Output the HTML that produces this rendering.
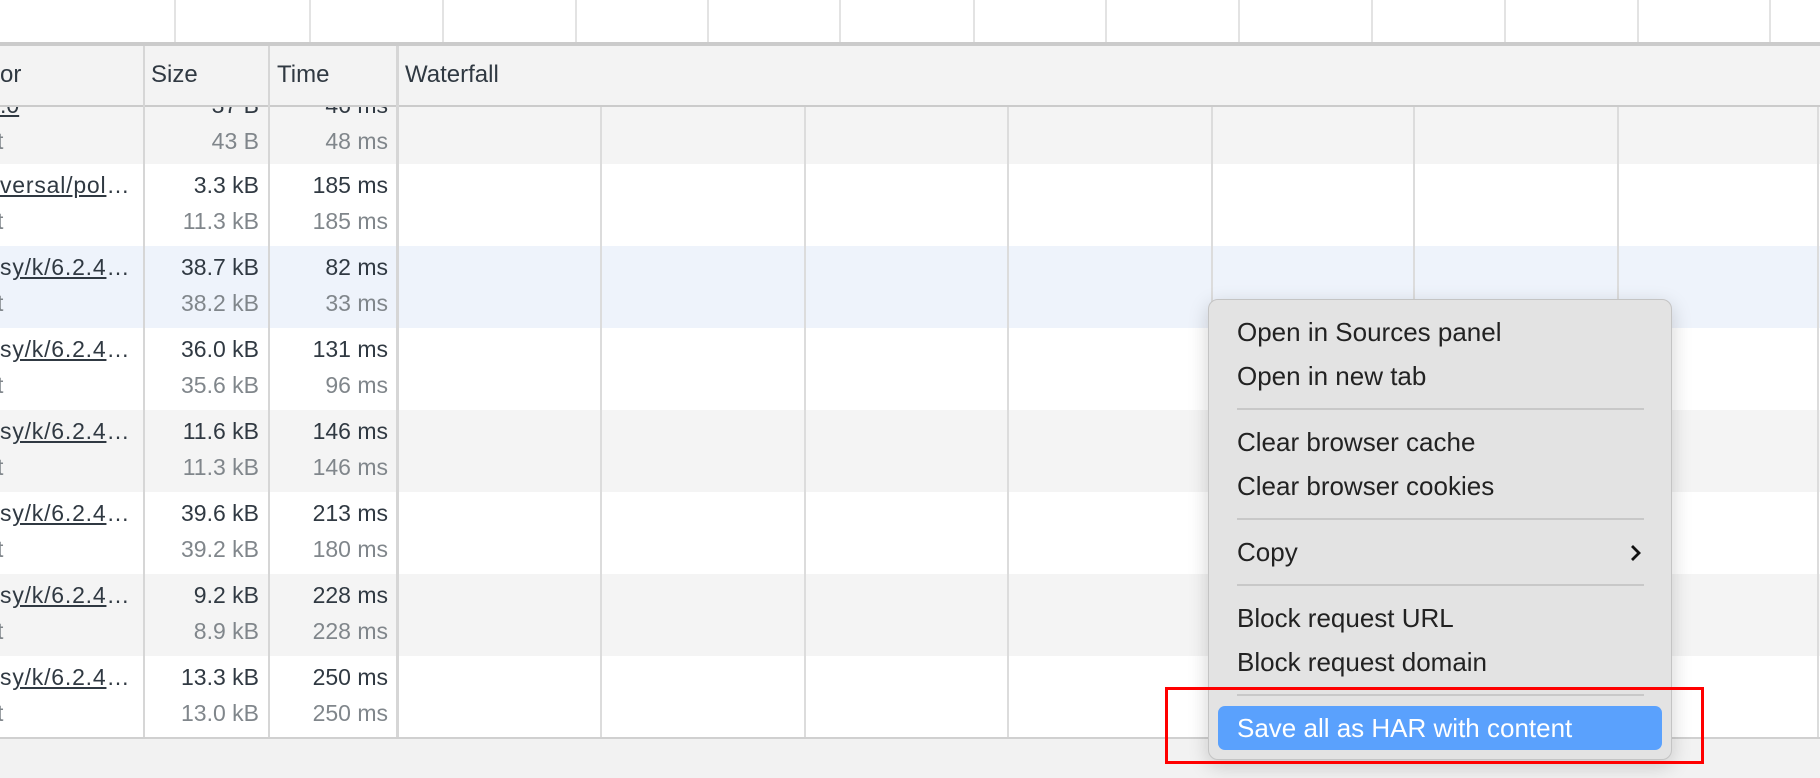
<!DOCTYPE html>
<html><head><meta charset="utf-8"><style>
*{margin:0;padding:0;box-sizing:border-box}
body{width:1820px;height:778px;overflow:hidden;background:#fff;position:relative;font-family:"Liberation Sans",Arial,sans-serif;}
.a{position:absolute}
.vt{position:absolute;top:0;height:44px;width:2px;background:#e3e3e3}
.row{position:absolute;left:0;width:1820px;height:82px;overflow:hidden}
.t{position:absolute;font-size:23px;line-height:26px;white-space:nowrap}
.h{font-size:24px}
.lk{letter-spacing:0.8px}
.d{color:#303942}.g{color:#80868b}
.r1{text-align:right}
.vl{position:absolute;width:2px;background:#dcdcdc}
.mi{position:absolute;left:1237px;font-size:26px;line-height:30px;color:#222}
.sep{position:absolute;left:1237px;width:407px;height:2px;background:#c8c8c8}
</style></head><body>
<div class="vt" style="left:174px"></div><div class="vt" style="left:309px"></div><div class="vt" style="left:442px"></div><div class="vt" style="left:575px"></div><div class="vt" style="left:707px"></div><div class="vt" style="left:839px"></div><div class="vt" style="left:973px"></div><div class="vt" style="left:1105px"></div><div class="vt" style="left:1238px"></div><div class="vt" style="left:1371px"></div><div class="vt" style="left:1504px"></div><div class="vt" style="left:1637px"></div><div class="vt" style="left:1769px"></div>
<div class="a" style="left:0;top:42px;width:1820px;height:4px;background:#cbcbcb"></div>
<div class="a" style="left:0;top:46px;width:1820px;height:61px;background:#f3f3f3;border-bottom:2px solid #cbcbcb"></div>
<div class="t d h" style="left:0;top:62px">or</div>
<div class="t d h" style="left:151px;top:62px">Size</div>
<div class="t d h" style="left:277px;top:62px">Time</div>
<div class="t d h" style="left:405px;top:62px">Waterfall</div>

<div class="row" style="top:107px;height:57px;background:#f4f4f4">
<div class="t d" style="left:0;top:-15px;text-decoration:underline">.0</div>
<div class="t d r1" style="left:140px;width:119px;top:-15px">37 B</div>
<div class="t d r1" style="left:270px;width:118px;top:-15px">46 ms</div>
<div class="t g" style="left:-3px;top:21px">t</div>
<div class="t g r1" style="left:140px;width:119px;top:21px">43 B</div>
<div class="t g r1" style="left:270px;width:118px;top:21px">48 ms</div>
</div>

<div class="row" style="top:164px;background:#fff">
<div class="t d lk" style="left:0;top:8px"><u>versal/pol</u>…</div>
<div class="t d r1" style="left:140px;width:119px;top:8px">3.3 kB</div>
<div class="t d r1" style="left:270px;width:118px;top:8px">185 ms</div>
<div class="t g" style="left:-3px;top:44px">t</div>
<div class="t g r1" style="left:140px;width:119px;top:44px">11.3 kB</div>
<div class="t g r1" style="left:270px;width:118px;top:44px">185 ms</div>
</div>

<div class="row" style="top:246px;background:#eef3fb">
<div class="t d lk" style="left:0;top:8px">s<u>y/k/6.2.4</u>…</div>
<div class="t d r1" style="left:140px;width:119px;top:8px">38.7 kB</div>
<div class="t d r1" style="left:270px;width:118px;top:8px">82 ms</div>
<div class="t g" style="left:-3px;top:44px">t</div>
<div class="t g r1" style="left:140px;width:119px;top:44px">38.2 kB</div>
<div class="t g r1" style="left:270px;width:118px;top:44px">33 ms</div>
</div>

<div class="row" style="top:328px;background:#fff">
<div class="t d lk" style="left:0;top:8px">s<u>y/k/6.2.4</u>…</div>
<div class="t d r1" style="left:140px;width:119px;top:8px">36.0 kB</div>
<div class="t d r1" style="left:270px;width:118px;top:8px">131 ms</div>
<div class="t g" style="left:-3px;top:44px">t</div>
<div class="t g r1" style="left:140px;width:119px;top:44px">35.6 kB</div>
<div class="t g r1" style="left:270px;width:118px;top:44px">96 ms</div>
</div>

<div class="row" style="top:410px;background:#f4f4f4">
<div class="t d lk" style="left:0;top:8px">s<u>y/k/6.2.4</u>…</div>
<div class="t d r1" style="left:140px;width:119px;top:8px">11.6 kB</div>
<div class="t d r1" style="left:270px;width:118px;top:8px">146 ms</div>
<div class="t g" style="left:-3px;top:44px">t</div>
<div class="t g r1" style="left:140px;width:119px;top:44px">11.3 kB</div>
<div class="t g r1" style="left:270px;width:118px;top:44px">146 ms</div>
</div>

<div class="row" style="top:492px;background:#fff">
<div class="t d lk" style="left:0;top:8px">s<u>y/k/6.2.4</u>…</div>
<div class="t d r1" style="left:140px;width:119px;top:8px">39.6 kB</div>
<div class="t d r1" style="left:270px;width:118px;top:8px">213 ms</div>
<div class="t g" style="left:-3px;top:44px">t</div>
<div class="t g r1" style="left:140px;width:119px;top:44px">39.2 kB</div>
<div class="t g r1" style="left:270px;width:118px;top:44px">180 ms</div>
</div>

<div class="row" style="top:574px;background:#f4f4f4">
<div class="t d lk" style="left:0;top:8px">s<u>y/k/6.2.4</u>…</div>
<div class="t d r1" style="left:140px;width:119px;top:8px">9.2 kB</div>
<div class="t d r1" style="left:270px;width:118px;top:8px">228 ms</div>
<div class="t g" style="left:-3px;top:44px">t</div>
<div class="t g r1" style="left:140px;width:119px;top:44px">8.9 kB</div>
<div class="t g r1" style="left:270px;width:118px;top:44px">228 ms</div>
</div>

<div class="row" style="top:656px;background:#fff">
<div class="t d lk" style="left:0;top:8px">s<u>y/k/6.2.4</u>…</div>
<div class="t d r1" style="left:140px;width:119px;top:8px">13.3 kB</div>
<div class="t d r1" style="left:270px;width:118px;top:8px">250 ms</div>
<div class="t g" style="left:-3px;top:44px">t</div>
<div class="t g r1" style="left:140px;width:119px;top:44px">13.0 kB</div>
<div class="t g r1" style="left:270px;width:118px;top:44px">250 ms</div>
</div>

<div class="vl" style="left:143px;top:46px;height:692px;background:#d6d6d6"></div>
<div class="vl" style="left:268px;top:46px;height:692px;background:#d6d6d6"></div>
<div class="vl" style="left:396px;top:46px;height:692px;width:3px;background:#d6d6d6"></div>
<div class="vl" style="left:600px;top:107px;height:631px"></div>
<div class="vl" style="left:804px;top:107px;height:631px"></div>
<div class="vl" style="left:1007px;top:107px;height:631px"></div>
<div class="vl" style="left:1211px;top:107px;height:631px"></div>
<div class="vl" style="left:1413px;top:107px;height:631px"></div>
<div class="vl" style="left:1617px;top:107px;height:631px"></div>
<div class="vl" style="left:1817px;top:107px;height:631px"></div>

<div class="a" style="left:0;top:737px;width:1820px;height:41px;background:#f2f2f2;border-top:2px solid #d0d0d0"></div>

<div class="a" style="left:1208px;top:299px;width:464px;height:461px;background:#e3e3e3;border:1px solid #c4c4c4;border-radius:10px;box-shadow:0 6px 20px rgba(0,0,0,0.18)"></div>
<div class="mi" style="top:317px">Open in Sources panel</div>
<div class="mi" style="top:361px">Open in new tab</div>
<div class="sep" style="top:408px"></div>
<div class="mi" style="top:427px">Clear browser cache</div>
<div class="mi" style="top:471px">Clear browser cookies</div>
<div class="sep" style="top:518px"></div>
<div class="mi" style="top:537px">Copy</div>
<svg class="a" style="left:1628px;top:543px" width="16" height="20" viewBox="0 0 16 20"><path d="M4 3 L11 10 L4 17" fill="none" stroke="#111" stroke-width="2.8"/></svg>
<div class="sep" style="top:584px"></div>
<div class="mi" style="top:603px">Block request URL</div>
<div class="mi" style="top:647px">Block request domain</div>
<div class="sep" style="top:694px"></div>
<div class="a" style="left:1218px;top:706px;width:444px;height:44px;background:#5aa1fd;border-radius:7px"></div>
<div class="mi" style="top:713px;color:#fff">Save all as HAR with content</div>
<div class="a" style="left:1165px;top:687px;width:539px;height:77px;border:3px solid #f00"></div>
</body></html>
